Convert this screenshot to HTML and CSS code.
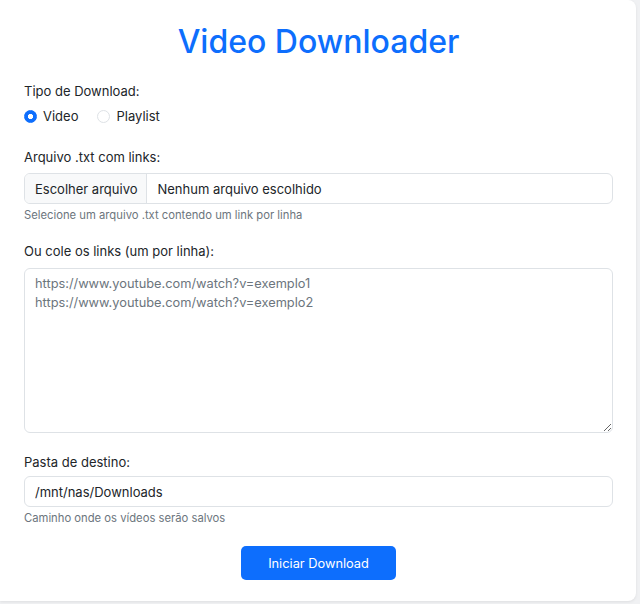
FILE: index.html
```html
<!DOCTYPE html>
<html lang="pt-BR">
<head>
<meta charset="utf-8">
<title>Video Downloader</title>
<link rel="stylesheet" href="styles.css">
</head>
<body>
<main class="card">
  <h1 class="title">Video Downloader</h1>
  <form class="form">
    <div class="group group-type">
      <span class="label">Tipo de Download:</span>
      <div class="radios">
        <label class="radio"><span class="dot checked"></span>Video</label>
        <label class="radio"><span class="dot"></span>Playlist</label>
      </div>
    </div>
    <div class="group group-file">
      <span class="label label-file">Arquivo .txt com links:</span>
      <div class="file">
        <span class="file-btn">Escolher arquivo</span>
        <span class="file-name">Nenhum arquivo escolhido</span>
      </div>
      <div class="help help-file">Selecione um arquivo .txt contendo um link por linha</div>
    </div>
    <div class="group group-links">
      <span class="label label-links">Ou cole os links (um por linha):</span>
      <textarea class="textarea" placeholder="https://www.youtube.com/watch?v=exemplo1&#10;https://www.youtube.com/watch?v=exemplo2"></textarea>
    </div>
    <div class="group">
      <span class="label label-dest">Pasta de destino:</span>
      <input class="input" type="text" value="/mnt/nas/Downloads">
      <div class="help">Caminho onde os vídeos serão salvos</div>
    </div>
    <div class="actions">
      <button class="btn" type="button">Iniciar Download</button>
    </div>
  </form>
</main>
</body>
</html>
```

FILE: styles.css
```css
* { box-sizing: border-box; }
html, body { margin: 0; padding: 0; }
body {
  background: #f0f1f3;
  font-family: Inter, "Noto Sans", sans-serif;
  color: #212529;
  width: 640px;
  height: 604px;
  overflow: hidden;
}
.card {
  width: 636px;
  height: 601px;
  background: #fff;
  border-radius: 0 8px 8px 0;
  box-shadow: 0 1px 3px rgba(0,0,0,0.08);
  padding: 21px 23px 0 24px;
}
.title {
  margin: 0 0 18px;
  text-align: center;
  color: #0d6efd;
  font-weight: 500;
  font-size: 32px;
  line-height: 42px;
}
.group { margin-bottom: 18px; }
.group-type { margin-bottom: 21px; }
.group-links { margin-bottom: 19px; }
.label {
  display: block;
  font-size: 13px;
  line-height: 20px;
  margin-bottom: 5px;
}
.label-file { margin-bottom: 6px; }
.label-links { margin-bottom: 7px; }
.label-dest { margin-bottom: 4px; }
.radios { display: flex; gap: 19px; margin-top: 5px; }
.radio {
  display: flex;
  align-items: center;
  gap: 6px;
  font-size: 13px;
  line-height: 20px;
}
.dot {
  width: 13px;
  height: 13px;
  border-radius: 50%;
  border: 1px solid #dee2e6;
  background: #fff;
}
.dot.checked {
  border-color: #0d6efd;
  background: radial-gradient(circle, #fff 0 2.4px, #0d6efd 2.9px);
}
.file {
  display: flex;
  height: 31px;
  border: 1px solid #dee2e6;
  border-radius: 6px;
  overflow: hidden;
  font-size: 13px;
  align-items: stretch;
}
.file-btn {
  background: #f8f9fa;
  border-right: 1px solid #dee2e6;
  padding: 0 9px 0 10px;
  display: flex;
  align-items: center;
}
.file-name {
  padding: 0 10px;
  display: flex;
  align-items: center;
}
.help {
  margin-top: 3px;
  font-size: 11.25px;
  line-height: 16px;
  color: #6c757d;
}
.textarea {
  display: block;
  width: 100%;
  height: 165px;
  border: 1px solid #dee2e6;
  border-radius: 6px;
  padding: 5px 10px;
  font-family: inherit;
  font-size: 12.8px;
  line-height: 19px;
  color: #212529;
  resize: vertical;
}
.textarea::placeholder { color: #6c757d; opacity: 1; }
.input {
  display: block;
  width: 100%;
  height: 31px;
  border: 1px solid #dee2e6;
  border-radius: 6px;
  padding: 0 10px;
  font-family: inherit;
  font-size: 13px;
  color: #212529;
}
.actions { display: flex; justify-content: center; padding-top: 2px; }
.btn {
  background: #0d6efd;
  color: #fff;
  border: 0;
  border-radius: 5px;
  width: 155px;
  height: 34px;
  font-family: inherit;
  font-size: 12.8px;
}
```
